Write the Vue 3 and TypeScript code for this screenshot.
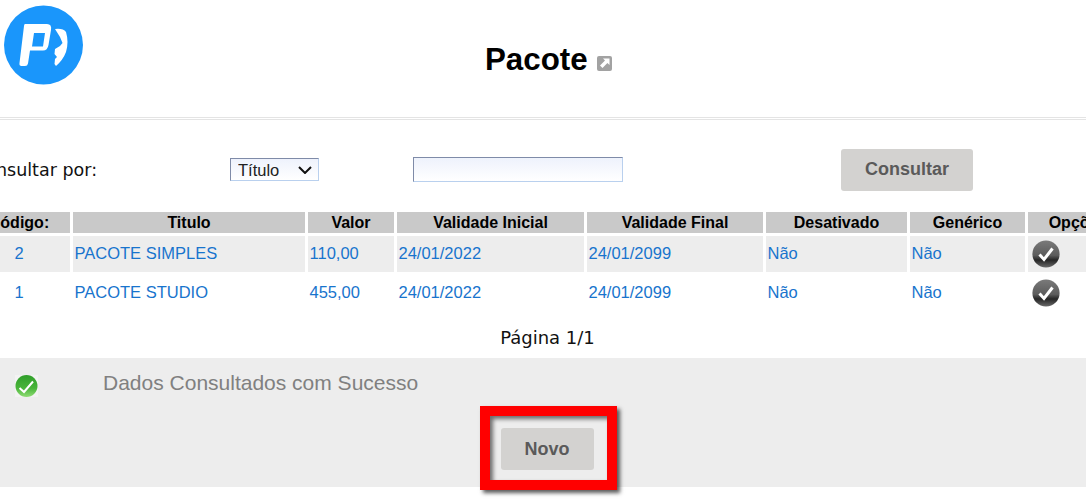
<script setup lang="ts">
type Pacote = {
  codigo: number
  titulo: string
  valor: string
  inicio: string
  fim: string
  desativado: string
  generico: string
}

const columns = [
  { label: 'Código:', width: 102 },
  { label: 'Titulo', width: 232 },
  { label: 'Valor', width: 86 },
  { label: 'Validade Inicial', width: 187 },
  { label: 'Validade Final', width: 176 },
  { label: 'Desativado', width: 141 },
  { label: 'Genérico', width: 115 },
  { label: 'Opções', width: 100 },
]

const pacotes: Pacote[] = [
  { codigo: 2, titulo: 'PACOTE SIMPLES', valor: '110,00', inicio: '24/01/2022', fim: '24/01/2099', desativado: 'Não', generico: 'Não' },
  { codigo: 1, titulo: 'PACOTE STUDIO', valor: '455,00', inicio: '24/01/2022', fim: '24/01/2099', desativado: 'Não', generico: 'Não' },
]
</script>

<template>
  <div class="page">
    <header class="top">
      <svg class="logo" viewBox="0 0 90 90" width="90" height="90">
        <circle cx="43.5" cy="45" r="39.5" fill="#1a96fb" />
        <path
          fill="#fff"
          fill-rule="evenodd"
          d="M25 24 L47 24 Q52 24 51 30 L48.5 45 Q47.5 50.5 43 50.5 L30 50.5 L28 63.5 Q27.5 66 25 66 L21.5 66 Q19 66 19.5 63 L24 26 Q24.2 24 25 24 Z M34 33 L45 33 L43 46.5 L32 46.5 Z"
        />
        <path
          fill="#fff"
          d="M55 29 Q63 28 66 32 Q69 42 66 52 Q63 60 56 66 L54.5 64 L55 59 L57 57 L54.5 54 L55 49 L60 46 L62.5 43 L60 37 Z"
        />
      </svg>
      <h1 class="title">Pacote</h1>
      <svg class="popout" viewBox="0 0 15 15" width="15" height="15">
        <rect x="0" y="0" width="15" height="15" rx="2" fill="#a2a2a2" />
        <path fill="#fff" d="M6 2.5 H12.5 V9 L10.4 6.9 L5.5 12 L3 9.5 L8 4.6 Z" />
      </svg>
    </header>
    <div class="divider"></div>

    <form class="search" @submit.prevent>
      <label class="search-label">Consultar por:</label>
      <div class="select-wrap">
        <select class="search-select">
          <option>Título</option>
        </select>
        <svg class="chevron" viewBox="0 0 14 8" width="14" height="8">
          <path d="M1 1 L7 7 L13 1" fill="none" stroke="#111" stroke-width="2" />
        </svg>
      </div>
      <input class="search-input" type="text" />
      <button type="button" class="btn search-btn">Consultar</button>
    </form>

    <table class="list">
      <colgroup>
        <col v-for="column in columns" :key="column.label" :style="{ width: column.width + 'px' }" />
      </colgroup>
      <thead>
        <tr>
          <th v-for="column in columns" :key="column.label">{{ column.label }}</th>
        </tr>
      </thead>
      <tbody>
        <tr v-for="pacote in pacotes" :key="pacote.codigo">
          <td class="code">{{ pacote.codigo }}</td>
          <td>{{ pacote.titulo }}</td>
          <td>{{ pacote.valor }}</td>
          <td>{{ pacote.inicio }}</td>
          <td>{{ pacote.fim }}</td>
          <td>{{ pacote.desativado }}</td>
          <td>{{ pacote.generico }}</td>
          <td class="option">
            <svg viewBox="0 0 28 28" width="28" height="28">
              <defs>
                <linearGradient id="darkCheck" x1="0" y1="0" x2="0" y2="1">
                  <stop offset="0" stop-color="#7a7a7a" />
                  <stop offset="0.55" stop-color="#5c5c5c" />
                  <stop offset="0.72" stop-color="#262626" />
                  <stop offset="1" stop-color="#6a6a6a" />
                </linearGradient>
              </defs>
              <circle cx="14" cy="14" r="13.6" fill="url(#darkCheck)" />
              <path d="M7.5 14.5 L12 19.5 L20.5 8.5" fill="none" stroke="#fff" stroke-width="3" />
            </svg>
          </td>
        </tr>
      </tbody>
    </table>

    <p class="pager">Página 1/1</p>

    <section class="panel">
      <div class="message">
        <svg class="ok" viewBox="0 0 23 22" width="23" height="22">
          <defs>
            <linearGradient id="greenCheck" x1="0" y1="0" x2="0" y2="1">
              <stop offset="0" stop-color="#2f9e2a" />
              <stop offset="0.6" stop-color="#49b53a" />
              <stop offset="1" stop-color="#8fdc74" />
            </linearGradient>
          </defs>
          <rect width="23" height="22" fill="#f3f3f3" />
          <circle cx="11.5" cy="11" r="11" fill="url(#greenCheck)" />
          <path d="M4.5 13 L9 17 L18 6.5" fill="none" stroke="#fff" stroke-width="2" />
        </svg>
        <span class="message-text">Dados Consultados com Sucesso</span>
      </div>
      <div class="actions">
        <div class="highlight">
          <button type="button" class="btn novo-btn">Novo</button>
          <span class="highlight-box"></span>
        </div>
      </div>
    </section>
  </div>
</template>

<style>
html,
body {
  margin: 0;
  background: #fff;
}
</style>

<style scoped>
.page {
  width: 1086px;
  height: 501px;
  overflow: hidden;
  font-family: "Liberation Sans", Arial, sans-serif;
  background: #fff;
}

.top {
  display: flex;
  align-items: flex-start;
  height: 117px;
}

.logo {
  flex: none;
}

.title {
  margin: 42px 0 0 395px;
  font-size: 31.3px;
  line-height: 36px;
  font-weight: 700;
  color: #000;
}

.popout {
  flex: none;
  margin: 56px 0 0 9px;
}

.divider {
  height: 1px;
  border-top: 1px solid #e4e4e4;
  border-bottom: 1px solid #e4e4e4;
}

.search {
  display: flex;
  align-items: center;
  height: 42px;
  margin: 29px 0 0 -27px;
}

.search-label {
  width: 257px;
  flex: none;
  font-family: "DejaVu Sans", sans-serif;
  font-size: 17.5px;
  color: #111;
}

.select-wrap {
  position: relative;
  flex: none;
  width: 89px;
  height: 23px;
  margin-top: -1px;
}

.chevron {
  position: absolute;
  top: 8px;
  right: 7px;
  pointer-events: none;
}

.search-select {
  display: block;
  width: 89px;
  height: 23px;
  box-sizing: border-box;
  padding: 0 0 0 7px;
  margin: 0;
  appearance: none;
  font-family: "Liberation Sans", sans-serif;
  font-size: 16.5px;
  line-height: 18px;
  color: #222;
  background: linear-gradient(#eef2fc, #fff);
  border: 1px solid;
  border-color: #7f8ba8 #b9d0ee #b9d0ee #7f8ba8;
  border-radius: 0;
}

.search-input {
  width: 210px;
  height: 25px;
  flex: none;
  box-sizing: border-box;
  margin: -1px 0 0 94px;
  background: linear-gradient(#eef2fc, #fff);
  border: 1px solid;
  border-color: #7f8ba8 #b9d0ee #b9d0ee #7f8ba8;
}

.btn {
  border: none;
  border-radius: 3px;
  background: #d3d2d0;
  color: #5a5a5a;
  font-family: "Liberation Sans", sans-serif;
  font-size: 18px;
  font-weight: 700;
}

.search-btn {
  width: 132px;
  height: 42px;
  flex: none;
  margin-left: 218px;
  padding: 0 0 2px;
}

.list {
  table-layout: fixed;
  width: 1160px;
  margin: 18px 0 0 -35px;
  border-collapse: separate;
  border-spacing: 3px;
  font-size: 16.5px;
}

.list th {
  height: 21px;
  padding: 0;
  background: #c9c9c9;
  color: #000;
  font-size: 16px;
  font-weight: 700;
  text-align: center;
}

.list td {
  height: 35px;
  padding: 0 0 1px 1.5px;
  color: #1874cd;
}

.list tbody tr:first-child td {
  background: #ededed;
}

.list td.code {
  padding: 0 0 1px;
  text-align: center;
}

.list td.option {
  padding: 0;
}

.option svg {
  display: block;
  margin: 0 0 0 4px;
}

.pager {
  margin: 14px 0 0;
  padding-left: 9px;
  height: 20px;
  line-height: 20px;
  text-align: center;
  font-family: "DejaVu Sans", sans-serif;
  font-size: 18px;
  color: #111;
}

.panel {
  height: 129px;
  margin-top: 10px;
  background: #ededed;
}

.message {
  display: flex;
  align-items: flex-start;
  padding: 13px 0 0 15px;
}

.ok {
  flex: none;
  margin-top: 4px;
}

.message-text {
  margin-left: 65px;
  font-size: 21px;
  line-height: 24px;
  color: #808080;
}

.actions {
  display: flex;
  justify-content: center;
  margin-top: 31px;
  padding-left: 8px;
}

.highlight {
  position: relative;
}

.novo-btn {
  display: block;
  width: 93px;
  height: 42px;
}

.highlight-box {
  position: absolute;
  top: -22px;
  right: -23px;
  bottom: -20px;
  left: -21px;
  border: 10.5px solid #f00;
  box-shadow: 3px 3px 4px rgba(0, 0, 0, 0.65), inset 3px 3px 4px rgba(0, 0, 0, 0.55);
}
</style>
